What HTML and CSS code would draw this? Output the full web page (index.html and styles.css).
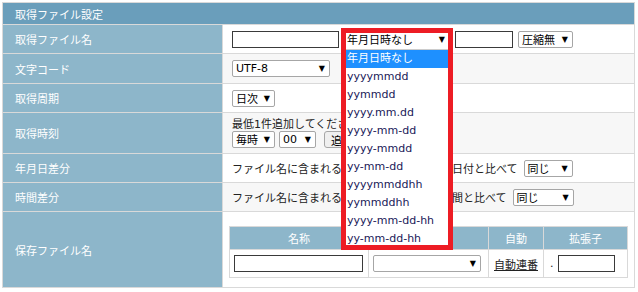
FILE: index.html
```html
<!DOCTYPE html>
<html lang="ja">
<head>
  <meta charset="UTF-8" />
  <title>取得ファイル設定</title>
  <link rel="stylesheet" href="styles.css">
</head>
<body>
  <div class="settings">
    <div class="head">取得ファイル設定</div>

    <div class="label">取得ファイル名</div>
    <div class="value">
      <input type="text" class="txt" style="width:107px">
      <div class="pick">
        <span class="sel face">年月日時なし<i>▼</i></span>
        <ul class="drop">
          <li class="on">年月日時なし</li>
          <li>yyyymmdd</li>
          <li>yymmdd</li>
          <li>yyyy.mm.dd</li>
          <li>yyyy-mm-dd</li>
          <li>yyyy-mmdd</li>
          <li>yy-mm-dd</li>
          <li>yyyymmddhh</li>
          <li>yymmddhh</li>
          <li>yyyy-mm-dd-hh</li>
          <li>yy-mm-dd-hh</li>
        </ul>
        <div class="frame"></div>
      </div>
      <input type="text" class="txt ext" style="width:58px">
      <span class="sel zip" style="width:55px">圧縮無<i>▼</i></span>
    </div>

    <div class="label">文字コード</div>
    <div class="value alt">
      <span class="sel" style="width:98px">UTF-8<i>▼</i></span>
    </div>

    <div class="label">取得周期</div>
    <div class="value">
      <span class="sel" style="width:43px">日次<i>▼</i></span>
    </div>

    <div class="label">取得時刻</div>
    <div class="value alt stack">
      <div class="note">最低1件追加してください</div>
      <div class="line">
        <span class="sel" style="width:43px">毎時<i>▼</i></span>
        <span class="sel" style="width:37px">00<i>▼</i></span>
        <button class="btn">追加</button>
      </div>
    </div>

    <div class="label">年月日差分</div>
    <div class="value">
      <span>ファイル名に含まれる年月日をファイル取得日付と比べて</span>
      <span class="sel same" style="width:49px">同じ<i>▼</i></span>
    </div>

    <div class="label">時間差分</div>
    <div class="value alt">
      <span>ファイル名に含まれる時間をファイル取得時間と比べて</span>
      <span class="sel same" style="width:61px">同じ<i>▼</i></span>
    </div>

    <div class="label">保存ファイル名</div>
    <div class="value files-cell">
      <div class="files">
        <div class="fh">名称</div>
        <div class="fh">日時形式</div>
        <div class="fh">自動</div>
        <div class="fh">拡張子</div>
        <div class="fc"><input type="text" class="txt" style="width:129px"></div>
        <div class="fc"><span class="sel" style="width:108px"><i>▼</i></span></div>
        <div class="fc mid"><a href="#">自動連番</a></div>
        <div class="fc ext-cell">.<input type="text" class="txt" style="width:57px"></div>
      </div>
    </div>
  </div>
</body>
</html>
```

FILE: styles.css
```css
body { margin: 0; background: #fff; font-family: "DejaVu Sans", "Noto Sans CJK JP", sans-serif; font-size: 11px; color: #222; }

.settings { display: grid; grid-template-columns: 219px 411px; grid-template-rows: 21px 28px 29px 28px 40px 28px 28px 75px; gap: 1px; background: #d9d9d9; border: 1px solid #d9d9d9; width: max-content; margin: 2px 0 0 2px; }
.head { grid-column: 1 / -1; background: #6a9ebb; color: #fff; display: flex; align-items: center; padding-left: 12px; }
.label { background: #8db6ca; color: #fff; display: flex; align-items: center; padding-left: 12px; }
.value { background: #fff; display: flex; align-items: center; padding-left: 9px; white-space: nowrap; }
.value.alt { background: #f7f7f7; }
.value.stack { flex-direction: column; align-items: flex-start; justify-content: center; }

.txt { box-sizing: border-box; height: 17px; border: 1px solid #3a3a3a; padding: 0 2px; margin: 0; font: inherit; background: #fff; }
.sel { display: inline-flex; align-items: center; justify-content: space-between; box-sizing: border-box; height: 17px; border: 1px solid #a6a6a6; border-radius: 2px; background: #fff; padding: 0 4px 0 3px; color: #000; }
.sel i { font-style: normal; font-size: 8px; margin-left: auto; padding-left: 4px; }

.pick { position: relative; z-index: 5; margin-left: 4px; }
.face { width: 107px; border-color: #fff; }
.drop { position: absolute; top: 18px; left: 0; width: 107px; margin: 0; padding: 0; list-style: none; background: #fff; border-top: 1px solid #ccc; }
.drop li { height: 18px; line-height: 18px; padding-left: 4px; color: #202058; }
.drop li.on { background: #1e90ff; color: #fff; }
.frame { position: absolute; left: -2px; top: -3px; width: 112px; height: 222px; box-sizing: border-box; border: 5px solid #ed1c24; }
.ext { margin-left: 5px; }
.zip { margin-left: 5px; }

.note { line-height: 12px; }
.line { display: flex; align-items: center; gap: 4px; }
.btn { height: 17px; margin-left: 4px; padding: 0 6px; font: inherit; background: #efefef; border: 1px solid #a6a6a6; border-radius: 3px; }
.same { margin-left: 6px; }

.files-cell { align-items: flex-start; padding: 14px 0 0 6px; }
.files { display: grid; grid-template-columns: 138px 119px 54px 83px; grid-template-rows: 22px 27px; gap: 1px; background: #d9d9d9; border: 1px solid #d9d9d9; }
.fh { background: #8db6ca; color: #fff; display: flex; align-items: center; justify-content: center; }
.fc { background: #fff; display: flex; align-items: center; padding-left: 4px; }
.fc.mid { justify-content: center; padding-left: 0; }
.fc a { color: #222; text-decoration: underline; }
.ext-cell { padding-left: 6px; }
.ext-cell .txt { margin-left: 4px; }
```
